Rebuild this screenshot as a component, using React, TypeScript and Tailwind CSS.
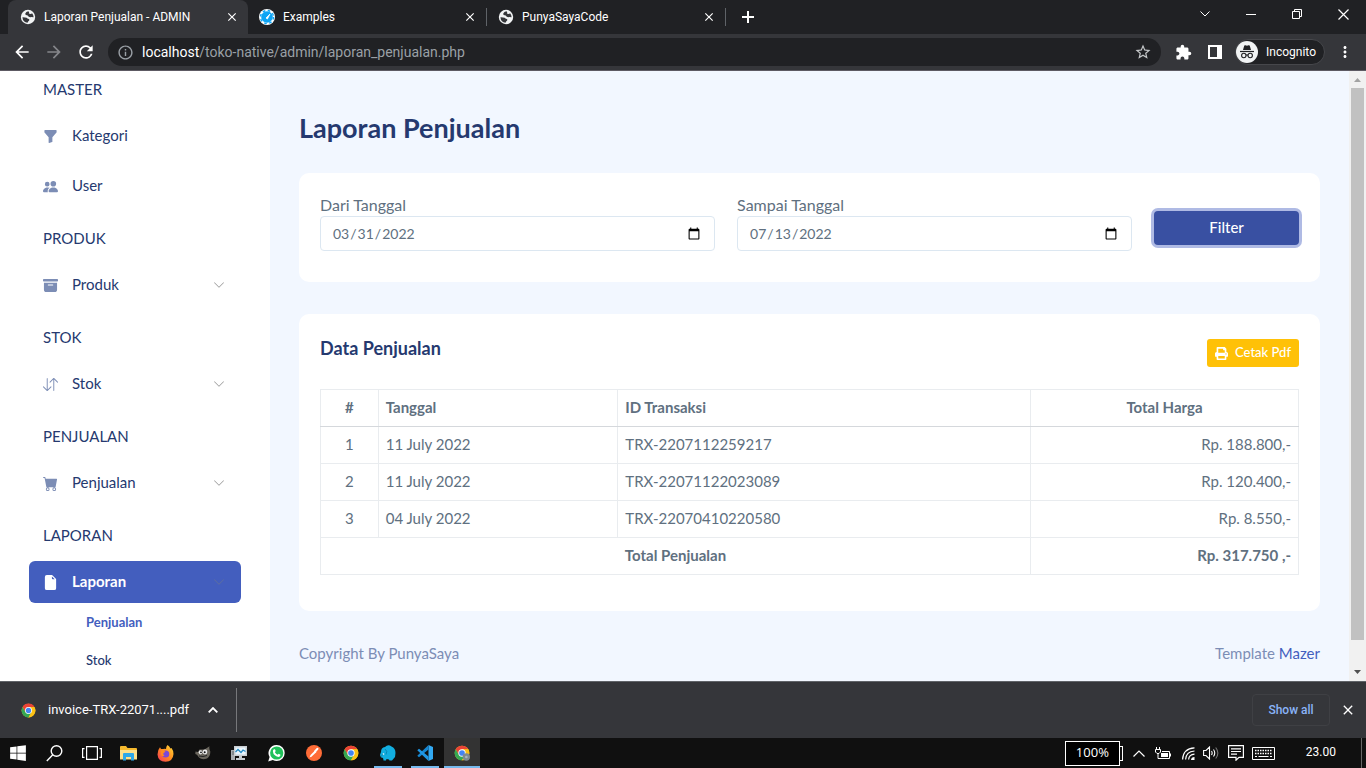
import React from "react";
import {
  BsArchiveFill,
  BsArrowDownUp,
  BsCartFill,
  BsChevronDown,
  BsFileEarmarkFill,
  BsFunnelFill,
  BsPeopleFill,
} from "react-icons/bs";
import { FaPrint, FaWindows } from "react-icons/fa";
import {
  MdArrowBack,
  MdArrowForward,
  MdClose,
  MdExtension,
  MdInfoOutline,
  MdMoreVert,
  MdRefresh,
  MdStarBorder,
} from "react-icons/md";

function ChromeLogo({ size = 16, badge = false }: { size?: number; badge?: boolean }) {
  return (
    <svg width={size} height={size} viewBox="0 0 48 48" aria-hidden="true">
      <circle cx="24" cy="24" r="22" fill="#fbc116" />
      <path d="M24 13H43.100A22 22 0 0 0 4.900 13L14.500 29.500Z" fill="#ea4335" />
      <path d="M4.900 13A22 22 0 0 0 24 46L33.500 29.500 14.500 29.500Z" fill="#34a853" />
      <path d="M43.100 13A22 22 0 0 1 24 46L33.500 29.500 24 13Z" fill="#fbc116" />
      <circle cx="24" cy="24" r="11" fill="#fff" />
      <circle cx="24" cy="24" r="8.500" fill="#4285f4" />
      {badge && (
        <g>
          <circle cx="37" cy="36" r="11" fill="#7d8a92" />
          <circle cx="37" cy="36" r="4" fill="#a9b4ba" />
        </g>
      )}
    </svg>
  );
}

function GlobeLogo() {
  return (
    <svg width="16" height="16" viewBox="0 0 16 16" className="shrink-0" aria-hidden="true">
      <circle cx="8" cy="8" r="7.200" fill="#f1f3f4" />
      <path
        d="M8.300 2.300Q6 2.600 5.300 4.500 5 6.200 6.800 6.300 8 6.300 8.200 7.300 9.500 8.300 11.200 8.100L13.600 8.300Q13.500 6 12.300 4.600L11 4.800Q9.800 5.300 8.800 4.300 9.800 3.300 8.300 2.300Z"
        fill="#35363a"
      />
      <path
        d="M2.400 8.200Q2.500 10.800 4.300 12.400 6 13.600 8 13.600 7.600 12.200 9 11.800 10 10.800 8.800 10 7.200 9.900 6.600 8.800 5 8.100 2.400 8.200Z"
        fill="#35363a"
      />
    </svg>
  );
}

function ClockLogo() {
  return (
    <svg width="16" height="16" viewBox="0 0 16 16" className="shrink-0" aria-hidden="true">
      <circle cx="8" cy="8" r="8" fill="#fff" />
      <circle cx="8" cy="8" r="5.800" fill="#0ea5f5" />
      <circle cx="8" cy="8" r="6.500" fill="none" stroke="#0ea5f5" strokeWidth="1.400" strokeDasharray="2.600 2.500" />
      <path d="m7 9 4-4-2.600 5Z" fill="#fff" stroke="#fff" strokeWidth="0.800" />
    </svg>
  );
}

function IncognitoLogo() {
  return (
    <svg width="22" height="22" viewBox="0 0 22 22" aria-hidden="true">
      <circle cx="11" cy="11" r="11" fill="#f1f3f4" />
      <path d="M7 9 8.200 4.800Q8.500 4 9.400 4.300L11 4.800 12.600 4.300Q13.500 4 13.800 4.800L15 9Z" fill="#202124" />
      <path d="M4 10.500H18" stroke="#202124" strokeWidth="1.200" />
      <g fill="none" stroke="#202124" strokeWidth="1.100">
        <circle cx="7.800" cy="14.500" r="2.200" />
        <circle cx="14.200" cy="14.500" r="2.200" />
        <path d="M10 14.200Q11 13.500 12 14.200" />
      </g>
    </svg>
  );
}

function Tab({ title, icon, active = false }: { title: string; icon: React.ReactNode; active?: boolean }) {
  return (
    <div
      className={
        active
          ? "flex w-60 items-center gap-2 rounded-t-lg bg-[#35363a] pr-2 pl-3 text-white"
          : "flex w-[238px] items-center gap-2 pr-2 pl-[11px] text-white"
      }
    >
      {icon}
      <span className="grow truncate">{title}</span>
      <button aria-label={`Close ${title}`} className="flex size-4 items-center justify-center">
        <MdClose size={14} />
      </button>
    </div>
  );
}

function BrowserTop() {
  return (
    <header className="shrink-0 bg-[#202124] font-['Roboto',sans-serif] text-xs text-white">
      <div className="flex h-[34px] items-stretch pl-2">
        <Tab active title="Laporan Penjualan - ADMIN" icon={<GlobeLogo />} />
        <Tab title="Examples" icon={<ClockLogo />} />
        <span className="my-2 w-px bg-[#5f6368]" />
        <Tab title="PunyaSayaCode" icon={<GlobeLogo />} />
        <span className="my-2 w-px bg-[#5f6368]" />
        <button aria-label="New tab" className="flex w-11 items-center justify-center">
          <svg width="12" height="12" viewBox="0 0 12 12" stroke="currentColor" strokeWidth="2">
            <path d="M6 0V12M0 6H12" />
          </svg>
        </button>
        <div className="ml-auto flex pb-[6px]">
          <button aria-label="Search tabs" className="flex w-[46px] items-center justify-center">
            <svg width="10" height="6" viewBox="0 0 10 6" fill="none" stroke="currentColor">
              <path d="m0.500 0.500 4.500 4.500L9.500 0.500" />
            </svg>
          </button>
          <button aria-label="Minimize" className="flex w-[46px] items-center justify-center">
            <span className="h-px w-[10px] bg-white" />
          </button>
          <button aria-label="Restore" className="flex w-[46px] items-center justify-center">
            <svg width="10" height="10" viewBox="0 0 10 10" fill="none" stroke="currentColor">
              <path d="M.5 2.500H7.500V9.500H.5ZM2.500 2.500V.5H9.500V7.500H7.500" />
            </svg>
          </button>
          <button aria-label="Close window" className="flex w-[46px] items-center justify-center">
            <svg width="11" height="11" viewBox="0 0 11 11" stroke="currentColor" strokeWidth="1.200">
              <path d="m.5.5 10 10M10.500.5l-10 10" />
            </svg>
          </button>
        </div>
      </div>
      <div className="flex h-[37px] items-center border-b border-[#5d5a63] bg-[#35363a] px-3">
        <button aria-label="Back" className="mr-3">
          <MdArrowBack size={20} />
        </button>
        <button aria-label="Forward" className="mr-3 text-[#85868a]">
          <MdArrowForward size={20} />
        </button>
        <button aria-label="Reload" className="mr-3">
          <MdRefresh size={20} />
        </button>
        <div className="flex h-7 grow items-center rounded-full bg-[#202124] px-[9px]">
          <MdInfoOutline size={17} className="mr-2 text-[#9aa0a6]" />
          <span className="grow text-sm text-[#9aa0a6]">
            <span className="text-white">localhost</span>/toko-native/admin/laporan_penjualan.php
          </span>
          <button aria-label="Bookmark this tab" className="text-[#c4c7c9]">
            <MdStarBorder size={18} />
          </button>
        </div>
        <button aria-label="Extensions" className="ml-3 flex w-5 justify-center">
          <MdExtension size={17} />
        </button>
        <button aria-label="Side panel" className="ml-3 flex w-5 justify-center">
          <svg width="14" height="14" viewBox="0 0 14 14">
            <path fill="currentColor" fillRule="evenodd" d="M0 0H14V14H0ZM2 2V12H9V2Z" />
          </svg>
        </button>
        <div className="ml-[10px] flex h-[26px] items-center gap-2 rounded-full border border-[#46474b] bg-[#202124] pr-2">
          <IncognitoLogo />
          <span>Incognito</span>
        </div>
        <button aria-label="Menu" className="ml-[11px]">
          <MdMoreVert size={18} />
        </button>
      </div>
    </header>
  );
}

type ItemProps = { label: string; icon: React.ReactNode; arrow?: boolean; active?: boolean };

function MenuItem({ label, icon, arrow = false, active = false }: ItemProps) {
  return (
    <a
      href="#"
      className={
        active
          ? "flex h-[42px] items-center rounded-md bg-[#435ebe] px-[14px] text-[15px] font-bold text-white"
          : "flex h-[42px] items-center rounded-md px-[14px] text-[15px] text-[#25396f]"
      }
    >
      <span className={active ? "mr-[14px] text-white" : "mr-[14px] text-[#7c8db5]"}>{icon}</span>
      <span className="grow pb-[2px]">{label}</span>
      {arrow && <BsChevronDown size={12} className={active ? "mr-[2px] text-[#5f6f9f]" : "mr-[2px] text-[#999]"} />}
    </a>
  );
}

function MenuTitle({ children }: { children: string }) {
  return <h2 className="mt-[21px] mb-4 h-5 pl-[14px] text-[15px] leading-5 text-[#25396f]">{children}</h2>;
}

function Sidebar() {
  return (
    <nav className="w-[270px] shrink-0 overflow-hidden bg-white px-[29px]">
      <h2 className="mt-2 mb-4 h-5 pl-[14px] text-[15px] leading-5 text-[#25396f]">MASTER</h2>
      <div className="flex flex-col gap-2">
        <MenuItem label="Kategori" icon={<BsFunnelFill size={15} />} />
        <MenuItem label="User" icon={<BsPeopleFill size={15} />} />
      </div>
      <MenuTitle>PRODUK</MenuTitle>
      <MenuItem arrow label="Produk" icon={<BsArchiveFill size={15} />} />
      <MenuTitle>STOK</MenuTitle>
      <MenuItem arrow label="Stok" icon={<BsArrowDownUp size={15} />} />
      <MenuTitle>PENJUALAN</MenuTitle>
      <MenuItem arrow label="Penjualan" icon={<BsCartFill size={15} />} />
      <MenuTitle>LAPORAN</MenuTitle>
      <MenuItem arrow active label="Laporan" icon={<BsFileEarmarkFill size={15} />} />
      <ul className="pl-[57px] text-[13px] leading-[38px]">
        <li>
          <a href="#" className="font-bold text-[#435ebe]">
            Penjualan
          </a>
        </li>
        <li>
          <a href="#" className="font-medium text-[#25396f]">
            Stok
          </a>
        </li>
      </ul>
    </nav>
  );
}

function DateField({ id, label, value }: { id: string; label: string; value: string }) {
  return (
    <div className="w-5/12 px-[11px]">
      <label htmlFor={id} className="block text-base leading-[22px]">
        {label}
      </label>
      <input
        id={id}
        type="date"
        defaultValue={value}
        className="block h-[35px] w-full rounded border border-[#dce7f1] bg-white px-[11px] text-sm text-[#607080]"
      />
    </div>
  );
}

const rows = [
  ["1", "11 July 2022", "TRX-2207112259217", "Rp. 188.800,-"],
  ["2", "11 July 2022", "TRX-22071122023089", "Rp. 120.400,-"],
  ["3", "04 July 2022", "TRX-22070410220580", "Rp. 8.550,-"],
];

function SalesTable() {
  const cell = "h-[37px] border border-[#e9ecef] px-[7px] pb-[2px]";
  const head = "h-[37px] border border-[#e9ecef] border-b-[#d5d8dc] px-[7px] pb-[2px]";
  return (
    <table className="mt-[22px] w-full table-fixed border-collapse text-[15px] leading-5">
      <colgroup>
        <col className="w-[5.9%]" />
        <col className="w-[24.5%]" />
        <col className="w-[42.2%]" />
        <col className="w-[27.4%]" />
      </colgroup>
      <thead>
        <tr>
          <th className={head}>#</th>
          <th className={`${head} text-left`}>Tanggal</th>
          <th className={`${head} text-left`}>ID Transaksi</th>
          <th className={head}>Total Harga</th>
        </tr>
      </thead>
      <tbody>
        {rows.map(([no, date, id, total]) => (
          <tr key={id}>
            <td className={`${cell} text-center`}>{no}</td>
            <td className={cell}>{date}</td>
            <td className={cell}>{id}</td>
            <td className={`${cell} text-right`}>{total}</td>
          </tr>
        ))}
        <tr>
          <th colSpan={3} className={cell}>
            Total Penjualan
          </th>
          <th className={`${cell} text-right`}>Rp. 317.750 ,-</th>
        </tr>
      </tbody>
    </table>
  );
}

function Main() {
  return (
    <main className="min-w-0 grow overflow-hidden px-[29px] pt-10">
      <h1 className="text-[27px] leading-[34px] font-bold text-[#25396f]">Laporan Penjualan</h1>
      <section className="mt-7 rounded-[10px] bg-white px-[21px] pt-[21px] pb-[31px]">
        <form className="-mx-[11px] flex">
          <DateField id="from" label="Dari Tanggal" value="2022-03-31" />
          <DateField id="to" label="Sampai Tanggal" value="2022-07-13" />
          <div className="w-2/12 px-[11px] pt-[17px]">
            <button
              type="button"
              className="h-[34px] w-full rounded bg-[#3950a2] pb-[2px] font-medium text-white ring-[3px] ring-[#afbae4]"
            >
              Filter
            </button>
          </div>
        </form>
      </section>
      <section className="mt-8 rounded-[10px] bg-white px-[21px] pt-[25px] pb-9">
        <div className="flex items-start justify-between">
          <h2 className="text-lg leading-[18px] font-bold text-[#25396f]">Data Penjualan</h2>
          <button className="flex h-7 items-center gap-[7px] rounded-[3px] bg-[#ffc107] px-2 text-[13px] font-medium text-white">
            <FaPrint size={13} />
            Cetak Pdf
          </button>
        </div>
        <SalesTable />
      </section>
      <footer className="mt-8 flex justify-between leading-5 text-[#7c8db5]">
        <p>Copyright By PunyaSaya</p>
        <p>
          Template{" "}
          <a href="#" className="text-[#435ebe]">
            Mazer
          </a>
        </p>
      </footer>
    </main>
  );
}

function Scrollbar() {
  return (
    <div className="flex w-[17px] shrink-0 flex-col items-center bg-[#f1f1f1]" aria-hidden="true">
      <svg width="17" height="17" viewBox="0 0 17 17">
        <path d="M5 11 8.500 7 12 11Z" fill="#a3a3a3" />
      </svg>
      <div className="w-[13px] grow bg-[#c1c1c1]" />
      <div className="h-6" />
      <svg width="17" height="17" viewBox="0 0 17 17">
        <path d="M5 6 8.500 10 12 6Z" fill="#505050" />
      </svg>
    </div>
  );
}

function Downloads() {
  return (
    <div className="flex h-[57px] shrink-0 items-center border-t border-[#606368] bg-[#35363a] pr-[10px] font-['Roboto',sans-serif] text-xs text-white">
      <div className="flex h-11 w-[237px] items-center border-r border-[#77787b] pl-[21px]">
        <ChromeLogo size={15} />
        <span className="ml-3 grow text-[13px]">invoice-TRX-22071....pdf</span>
        <button aria-label="Download options" className="mr-[18px]">
          <svg width="10" height="6" viewBox="0 0 10 6" fill="none" stroke="currentColor" strokeWidth="1.800">
            <path d="m.7 5.300 4.300-4.300 4.300 4.300" />
          </svg>
        </button>
      </div>
      <button className="ml-auto h-8 w-[78px] rounded border border-[#3f4044] font-medium text-[#8ab4f8]">
        Show all
      </button>
      <button aria-label="Close downloads bar" className="ml-[10px]">
        <MdClose size={16} />
      </button>
    </div>
  );
}

type TaskProps = { label: string; children: React.ReactNode; state?: "idle" | "open" | "front" };

function TaskButton({ label, children, state = "idle" }: TaskProps) {
  return (
    <button
      aria-label={label}
      className={
        state === "front"
          ? "flex w-9 items-center justify-center border-b-2 border-[#76b9ed] bg-[#333] pt-[2px]"
          : "flex w-9 flex-col items-center justify-center"
      }
    >
      {state === "open" ? (
        <>
          <span className="flex grow items-center pt-[2px]">{children}</span>
          <span className="h-[2px] w-7 bg-[#76b9ed]" />
        </>
      ) : (
        children
      )}
    </button>
  );
}

function Taskbar() {
  return (
    <footer className="flex h-[30px] shrink-0 items-stretch bg-[#101010] text-white">
      <div className="flex gap-px">
        <TaskButton label="Start">
          <FaWindows size={18} />
        </TaskButton>
        <TaskButton label="Search">
          <svg width="18" height="17" viewBox="0 0 18 17" fill="none" stroke="currentColor" strokeWidth="1.400">
            <circle cx="10.500" cy="6" r="5.300" />
            <path d="M6.800 9.800.8 16" />
          </svg>
        </TaskButton>
        <TaskButton label="Task view">
          <svg width="20" height="14" viewBox="0 0 20 14" fill="none" stroke="currentColor" strokeWidth="1.200">
            <path d="M4.600.6H15.400V13.400H4.600ZM2.500 2.600H.6V11.400H2.500M17.500 2.600H19.400V11.400H17.500" />
          </svg>
        </TaskButton>
        <TaskButton label="File Explorer">
          <svg width="18" height="15" viewBox="0 0 18 15">
            <path d="M0 1Q0 0 1 0H6L7.500 2H16Q17 2 17 3V13H0Z" fill="#f5b92e" />
            <path d="M0 4H17V13.500H0Z" fill="#ffe08a" />
            <path d="M3 14.500V8Q3 7 4 7H13Q14 7 14 8V14.500H11V11H6V14.500Z" fill="#2fa8e8" />
          </svg>
        </TaskButton>
        <TaskButton label="Firefox">
          <svg width="18" height="17" viewBox="0 0 18 17">
            <defs>
              <linearGradient id="fox" x1="1" y1="0" x2="0" y2="1">
                <stop offset="0" stopColor="#ffe13a" />
                <stop offset="0.500" stopColor="#ff8a1f" />
                <stop offset="1" stopColor="#f5315e" />
              </linearGradient>
            </defs>
            <path
              d="M10.500 0Q12.500 1 13.500 3.500L14.500 3Q16.500 5.500 16.500 9 16 16.500 8.500 16.700 1 16.500.5 9.500.5 5 3 2.300L4 4 6 4Q8 3.500 9 4 9 1.500 10.500 0Z"
              fill="url(#fox)"
            />
            <circle cx="8.700" cy="9" r="3.600" fill="#7a48d8" />
            <path d="M4 5Q6.500 4.500 8.500 6.800L6.500 8Q5.500 9.800 7.500 10.500 5 12 3.800 9.500Z" fill="#ff8a1f" />
          </svg>
        </TaskButton>
        <TaskButton label="GIMP">
          <svg width="16" height="14" viewBox="0 0 16 14">
            <path d="M.5 5.500 3 6 4.500 3.500 9.500 3.500 14.500.3Q13.800 2.500 15.300 5.500 15.500 10 12 12.500 7 14.300 4 11.500L2 8.800.3 8Z" fill="#6b675e" />
            <ellipse cx="5.600" cy="6.300" rx="1.900" ry="2.100" fill="#eee" />
            <ellipse cx="10" cy="6" rx="2.300" ry="2.400" fill="#eee" />
            <circle cx="6" cy="6.300" r=".9" fill="#111" />
            <circle cx="9.700" cy="6.200" r="1" fill="#111" />
            <path d="M4 10Q8 11.300 12 9.500" stroke="#222" fill="none" />
          </svg>
        </TaskButton>
        <TaskButton label="System monitor">
          <svg width="18" height="16" viewBox="0 0 18 16">
            <path d="M0 5H4V15H0Z" fill="#a8adb1" />
            <path d="M1 7H3M1 9H3" stroke="#5d6468" />
            <path d="M3 1H16V11H3Z" fill="#c9cfd3" />
            <path d="M4.500 2.500H14.500V9.500H4.500Z" fill="#eaf7ff" />
            <path d="m4.500 7 2.500-2.500 3 3L12 5l2.500 1.500" fill="none" stroke="#258bc4" strokeWidth="1.300" />
            <path d="M8 11H11V13H14V15H5V13H8Z" fill="#c5cbd0" />
          </svg>
        </TaskButton>
        <TaskButton label="WhatsApp">
          <svg width="18" height="17" viewBox="0 0 18 17">
            <path d="M8.700 0A8 8 0 0 1 8.700 16 8.500 8.500 0 0 1 4.800 15L.2 16.500 1.600 12A8 8 0 0 1 8.700 0Z" fill="#fff" />
            <circle cx="8.700" cy="8" r="6.600" fill="#20c15a" />
            <path d="M5.900 4.200 7 4.300 7.700 6.100 6.900 7.200Q7.800 9 9.700 9.800L10.700 8.800 12.500 9.700Q12.600 11.700 10.500 11.900 5.400 11 4.900 6.500 4.800 5 5.900 4.200Z" fill="#fff" />
          </svg>
        </TaskButton>
        <TaskButton label="Postman">
          <svg width="16" height="16" viewBox="0 0 16 16">
            <circle cx="8" cy="8" r="8" fill="#ff6c37" />
            <path d="m3.500 12.500 1-2.500 4.500-4.500 1.500 1.500L6 11.300Z" fill="#fff" />
            <path d="m9 6.500 2.500-2.700" stroke="#fff" strokeWidth="2" strokeLinecap="round" />
          </svg>
        </TaskButton>
        <TaskButton label="Chrome">
          <ChromeLogo size={16} />
        </TaskButton>
        <TaskButton label="Database client" state="open">
          <svg width="16" height="16" viewBox="0 0 16 16">
            <path d="M1 7Q1 2.500 5 2 8-1 11.500 1.500 15.500 3 15.500 8L15 12 12 15.500H9.500L9 14.500 6.500 14 6 15.500 3.500 15.500Q3.500 12 1 12.500L0 10Z" fill="#12aee0" />
            <path d="M5 4Q8 6 6 9.500M2.500 9 1.500 11.500" fill="none" stroke="#087ba8" strokeWidth=".8" />
            <circle cx="3.500" cy="9" r=".8" fill="#fff" />
          </svg>
        </TaskButton>
        <TaskButton label="Visual Studio Code" state="open">
          <svg width="16" height="16" viewBox="0 0 16 16">
            <path d="M11.500 0 16 2V14L11.500 16Z" fill="#32a9f2" />
            <path d="M11.500 0V4.500L2 12.200.3 10.800Z" fill="#1686d0" />
            <path d="M11.500 16V11.500L2 3.800.3 5.200Z" fill="#2096e3" />
          </svg>
        </TaskButton>
        <TaskButton label="Chrome incognito" state="front">
          <ChromeLogo size={16} badge />
        </TaskButton>
      </div>
      <div className="ml-auto flex items-center font-['Roboto',sans-serif]">
        <div className="flex items-center">
          <span className="flex h-[25px] w-[55px] items-center justify-center border border-white bg-black font-['Open_Sans',sans-serif] text-[13px]">
            100%
          </span>
          <span className="h-[15px] w-[3px] border border-l-0 border-white" />
        </div>
        <svg className="ml-[10px]" width="12" height="7" viewBox="0 0 12 7" fill="none" stroke="currentColor" strokeWidth="1.200">
          <path d="m.5 6.500 5.500-5.500 5.500 5.500" />
        </svg>
        <svg className="ml-[10px]" width="16" height="13" viewBox="0 0 16 13" fill="none" stroke="currentColor">
          <path d="M1.500 0V2.500M4.500 0V2.500M.5 2.500H5.500V5L4 6.500H2L.5 5ZM3 6.500V11.500H14.500V4.500H7" />
          <path d="M6 6H13V10H6ZM15 6.500H16V9.500H15Z" fill="currentColor" stroke="none" />
        </svg>
        <svg className="ml-[11px]" width="13" height="13" viewBox="0 0 13 13" fill="none" stroke="currentColor" strokeWidth="1.200">
          <path d="M.6 12.500Q1 1.500 12.500.8M3.600 12.500Q4 4.600 12.500 4M6.600 12.500Q7 7.600 12.500 7.200" />
          <path d="M9 13Q9.200 10.200 12.500 10V13Z" fill="currentColor" stroke="none" />
        </svg>
        <svg className="ml-2" width="17" height="14" viewBox="0 0 17 14" fill="none" stroke="currentColor" strokeWidth="1.100">
          <path d="M.6 4.500H3L6.500 1V13L3 9.500H.6ZM8.500 5Q9.800 7 8.500 9M10.500 3.500Q13 7 10.500 10.500" />
          <path d="M12.700 1.500Q17 7 12.700 12.500" stroke="#777" />
        </svg>
        <svg className="ml-2" width="16" height="16" viewBox="0 0 16 16" fill="none" stroke="currentColor" strokeWidth="1.200">
          <path d="M.6.6H15.400V12.400H11L8 15.200V12.400H.6ZM3 3.800H13M3 6.500H13M3 9.200H9" />
        </svg>
        <svg className="ml-2" width="23" height="13" viewBox="0 0 23 13" fill="none" stroke="currentColor">
          <path d="M.5.5H22.500V12.500H.5Z" />
          <path d="M3 3.500H20M3 6.500H20" strokeDasharray="1.500 1" strokeWidth="1.300" />
          <path d="M3 9.500H5M6.500 9.500H16.500M18 9.500H20" />
        </svg>
        <span className="ml-[31px] pb-[2px] text-xs">23.00</span>
        <span className="ml-[25px] h-[30px] w-[5px] border-l border-[#666]" />
      </div>
    </footer>
  );
}

export default function App() {
  return (
    <div className="flex h-screen flex-col overflow-hidden bg-[#f2f7ff]">
      <BrowserTop />
      <div className="flex min-h-0 grow font-['Lato',sans-serif] text-[15px] text-[#607080]">
        <Sidebar />
        <Main />
        <Scrollbar />
      </div>
      <Downloads />
      <Taskbar />
    </div>
  );
}
